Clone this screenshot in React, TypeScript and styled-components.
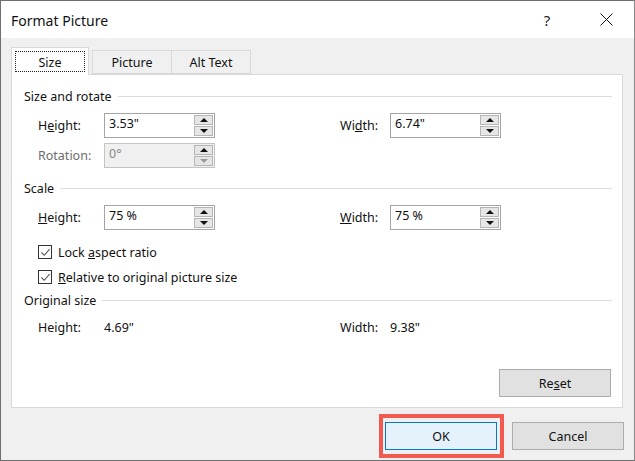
import React from "react";
import styled, { createGlobalStyle } from "styled-components";

const GlobalStyle = createGlobalStyle`
  html, body {
    margin: 0;
    padding: 0;
    background: #ffffff;
  }
  * {
    box-sizing: border-box;
  }
`;

const font = `"Noto Sans", "Open Sans", sans-serif`;

const Spinner = ({ value, disabled }: { value: string; disabled?: boolean }) => (
  <SpinBox disabled={disabled}>
    <SpinText disabled={disabled}>{value}</SpinText>
    <SpinButtons>
      <SpinButton>
        <Arrow up />
      </SpinButton>
      <SpinButton>
        <Arrow faded={disabled} />
      </SpinButton>
    </SpinButtons>
  </SpinBox>
);

const CheckBox = () => (
  <Box>
    <svg width="11" height="11" viewBox="0 0 11 11">
      <path d="M1.5 5.5 L4.2 8.3 L9.6 2.2" fill="none" stroke="#555" strokeWidth="1.1" />
    </svg>
  </Box>
);

const App = () => {
  return (
    <>
      <GlobalStyle />
      <Window>
        <TitleBar>
          <Title>Format Picture</Title>
          <TitleButtons>
            <Help>?</Help>
            <Close>
              <svg width="13" height="13" viewBox="0 0 13 13">
                <path d="M0.5 0.5 L12.5 12.5 M12.5 0.5 L0.5 12.5" stroke="#111" strokeWidth="1" />
              </svg>
            </Close>
          </TitleButtons>
        </TitleBar>
        <Body>
          <Tabs>
            <Tab active>
              <FocusRing>Size</FocusRing>
            </Tab>
            <Tab>Picture</Tab>
            <Tab>Alt Text</Tab>
          </Tabs>
          <Panel>
            <Section>
              <span>Size and rotate</span>
            </Section>
            <FieldRow>
              <FieldPair>
                <Label>
                  H<u>e</u>ight:
                </Label>
                <Spinner value={'3.53"'} />
              </FieldPair>
              <FieldPair>
                <Label narrow>
                  Wi<u>d</u>th:
                </Label>
                <Spinner value={'6.74"'} />
              </FieldPair>
            </FieldRow>
            <FieldRow gap={5}>
              <FieldPair>
                <Label disabled>Rotation:</Label>
                <Spinner value="0°" disabled />
              </FieldPair>
            </FieldRow>
            <Section gap={12}>
              <span>Scale</span>
            </Section>
            <FieldRow>
              <FieldPair>
                <Label>
                  <u>H</u>eight:
                </Label>
                <Spinner value="75 %" />
              </FieldPair>
              <FieldPair>
                <Label narrow>
                  <u>W</u>idth:
                </Label>
                <Spinner value="75 %" />
              </FieldPair>
            </FieldRow>
            <CheckRow gap={12}>
              <CheckBox />
              <span>
                Lock <u>a</u>spect ratio
              </span>
            </CheckRow>
            <CheckRow gap={5}>
              <CheckBox />
              <span>
                <u>R</u>elative to original picture size
              </span>
            </CheckRow>
            <Section gap={5}>
              <span>Original size</span>
            </Section>
            <InfoRow>
              <FieldPair>
                <Label>Height:</Label>
                <Value>4.69"</Value>
              </FieldPair>
              <FieldPair>
                <Label narrow>Width:</Label>
                <Value>9.38"</Value>
              </FieldPair>
            </InfoRow>
            <PanelFooter>
              <Button>
                Re<u>s</u>et
              </Button>
            </PanelFooter>
          </Panel>
          <Footer>
            <Highlight>
              <Button primary>OK</Button>
            </Highlight>
            <Button>Cancel</Button>
          </Footer>
        </Body>
      </Window>
    </>
  );
};

const Window = styled.div`
  width: 635px;
  height: 461px;
  border: 1px solid #6f6f6f;
  border-right-color: #8a8a8a;
  background: #f0f0f0;
  display: flex;
  flex-direction: column;
  font-family: ${font};
  font-size: 12.5px;
  color: #111;
`;

const TitleBar = styled.div`
  height: 37px;
  background: #ffffff;
  display: flex;
  align-items: center;
  justify-content: space-between;
  padding: 0 0 0 10px;
`;

const Title = styled.div`
  font-size: 14px;
  color: #111;
  margin-top: 1px;
`;

const TitleButtons = styled.div`
  display: flex;
  align-items: center;
  height: 100%;
`;

const Help = styled.div`
  width: 46px;
  text-align: center;
  font-size: 15px;
  color: #222;
  margin-right: 13px;
`;

const Close = styled.div`
  width: 46px;
  height: 100%;
  display: flex;
  align-items: center;
  justify-content: center;
  margin-right: 5px;
`;

const Body = styled.div`
  flex: 1;
  display: flex;
  flex-direction: column;
  padding: 10px 10px 10px 10px;
`;

const Tabs = styled.div`
  display: flex;
  align-items: flex-end;
  height: 26px;
  position: relative;
  z-index: 1;
`;

const Tab = styled.div<{ active?: boolean }>`
  height: ${(p) => (p.active ? "28px" : "24px")};
  margin-bottom: ${(p) => (p.active ? "-1px" : "0")};
  padding: ${(p) => (p.active ? "3px 3px" : "0 0")};
  width: ${(p) => (p.active ? "78px" : "80px")};
  margin-left: ${(p) => (p.active ? "0" : "-1px")};
  background: ${(p) => (p.active ? "#ffffff" : "#f0f0f0")};
  border: 1px solid #d9d9d9;
  border-bottom: ${(p) => (p.active ? "none" : "1px solid #d9d9d9")};
  display: flex;
  align-items: center;
  justify-content: center;
  &:nth-child(2) {
    margin-left: 3px;
  }
`;

const FocusRing = styled.div`
  width: 100%;
  height: 100%;
  border: 1px dotted #222;
  display: flex;
  align-items: center;
  justify-content: center;
  padding-top: 1px;
`;

const Panel = styled.div`
  width: 612px;
  height: 334px;
  background: #ffffff;
  border: 1px solid #d9d9d9;
  display: flex;
  flex-direction: column;
  padding: 13px 10px 10px 12px;
`;

const Section = styled.div<{ gap?: number }>`
  display: flex;
  align-items: center;
  height: 16px;
  margin-top: ${(p) => p.gap ?? 0}px;
  gap: 6px;
  &::after {
    content: "";
    flex: 1;
    height: 1px;
    background: #dcdcdc;
  }
`;

const FieldRow = styled.div<{ gap?: number }>`
  display: flex;
  height: 25px;
  margin-top: ${(p) => p.gap ?? 9}px;
  padding-left: 14px;
`;

const InfoRow = styled(FieldRow)`
  height: 20px;
  margin-top: 9px;
  align-items: center;
`;

const FieldPair = styled.div`
  display: flex;
  align-items: center;
  width: 302px;
  flex-shrink: 0;
`;

const Label = styled.div<{ disabled?: boolean; narrow?: boolean }>`
  width: ${(p) => (p.narrow ? "50px" : "66px")};
  color: ${(p) => (p.disabled ? "#6d6d6d" : "#111")};
`;

const Value = styled.div`
  color: #111;
`;

const SpinBox = styled.div<{ disabled?: boolean }>`
  width: 111px;
  height: 25px;
  border: 1px solid ${(p) => (p.disabled ? "#c4c4c4" : "#a5a5a5")};
  background: ${(p) => (p.disabled ? "#f0f0f0" : "#ffffff")};
  display: flex;
  align-items: stretch;
`;

const SpinText = styled.div<{ disabled?: boolean }>`
  flex: 1;
  padding: 2px 0 0 4px;
  line-height: 16px;
  color: ${(p) => (p.disabled ? "#8a8a8a" : "#111")};
`;

const SpinButtons = styled.div`
  width: 20px;
  display: flex;
  flex-direction: column;
  padding: 1px 1px 1px 0;
  gap: 1px;
`;

const SpinButton = styled.div`
  flex: 1;
  background: #e6e6e6;
  border: 1px solid #b5b5b5;
  display: flex;
  align-items: center;
  justify-content: center;
`;

const Arrow = styled.div<{ up?: boolean; faded?: boolean }>`
  width: 0;
  height: 0;
  border-left: 4px solid transparent;
  border-right: 4px solid transparent;
  ${(p) =>
    p.up
      ? `border-bottom: 4px solid ${p.faded ? "#9a9a9a" : "#111"};`
      : `border-top: 4px solid ${p.faded ? "#9a9a9a" : "#111"};`}
`;

const CheckRow = styled.div<{ gap?: number }>`
  display: flex;
  align-items: center;
  gap: 6px;
  height: 20px;
  margin-top: ${(p) => p.gap ?? 0}px;
  padding-left: 14px;
`;

const Box = styled.div`
  width: 14px;
  height: 14px;
  border: 1px solid #333;
  background: #fff;
  display: flex;
  align-items: center;
  justify-content: center;
`;

const PanelFooter = styled.div`
  margin-top: auto;
  display: flex;
  justify-content: flex-end;
  padding-right: 1px;
`;

const Button = styled.div<{ primary?: boolean }>`
  width: 112px;
  height: 28px;
  display: flex;
  align-items: center;
  justify-content: center;
  background: ${(p) => (p.primary ? "#e5f1fb" : "#e1e1e1")};
  border: 1px solid ${(p) => (p.primary ? "#0078d7" : "#adadad")};
  color: #111;
`;

const Footer = styled.div`
  margin-top: auto;
  display: flex;
  justify-content: flex-end;
  gap: 15px;
  padding-right: 0;
`;

const Highlight = styled.div`
  position: relative;
  &::after {
    content: "";
    position: absolute;
    top: -8px;
    bottom: -8px;
    left: -6px;
    right: -7px;
    border: 4px solid #f35a4f;
    pointer-events: none;
  }
`;

export default App;
